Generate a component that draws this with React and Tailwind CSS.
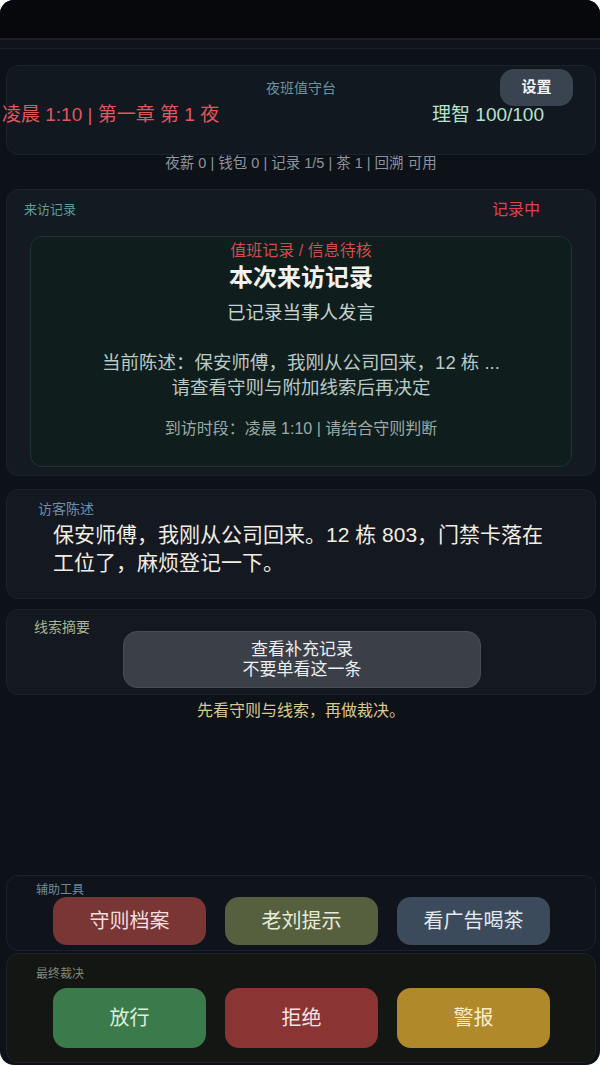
import { useState } from 'react';

const font = { fontFamily: '"Liberation Sans", "Noto Sans CJK SC", sans-serif' };

const tools = [
  { label: '守则档案', className: 'bg-[#7a3535] text-[#f1dede]' },
  { label: '老刘提示', className: 'bg-[#56603f] text-[#e7ecd9]' },
  { label: '看广告喝茶', className: 'bg-[#3c4b5c] text-[#e3e9ef]' }
];

const verdicts = [
  { label: '放行', className: 'bg-[#3a7a4b] text-[#dcefd9]' },
  { label: '拒绝', className: 'bg-[#8b3434] text-[#f6e3e3]' },
  { label: '警报', className: 'bg-[#b08a2a] text-[#f8eccb]' }
];

function Panel({ className = '', children }) {
  return (
    <div className={`rounded-[12px] border border-[#1b222c] ${className}`}>{children}</div>
  );
}

function ButtonRow({ items, className }) {
  return (
    <div className="ml-[46px] grid w-[497px] grid-cols-3 gap-[19px]">
      {items.map((item) => (
        <button
          key={item.label}
          type="button"
          className={`${className} ${item.className} rounded-[14px] text-[20px]`}
        >
          {item.label}
        </button>
      ))}
    </div>
  );
}

export default function App() {
  const [recording] = useState(true);

  return (
    <div className="min-h-[1066px] bg-white" style={font}>
      <div className="flex h-[1065px] w-[600px] flex-col overflow-hidden rounded-[14px] bg-[#0d1118] pb-[2px]">
        <div className="h-[40px] shrink-0 border-b-2 border-[#1a1f28] bg-[#06080b]" />
        <div className="h-[9px] shrink-0 border-b border-[#1a1e27] bg-[#10131b]" />

        <div className="flex flex-1 flex-col pl-[6px] pr-[4px]">
          <Panel className="mt-[16px] h-[90px] bg-[#111820]">
            <div className="relative flex h-[40px] items-center justify-center pt-[4px]">
              <span className="text-[14px] text-[#6b929d]">夜班值守台</span>
              <button
                type="button"
                className="absolute right-[22px] top-[3px] h-[37px] w-[73px] rounded-[14px] bg-[#3a4350] text-[15px] font-bold text-[#f2f2f2]"
              >
                设置
              </button>
            </div>
            <div className="-ml-[5px] -mt-[3px] flex items-center justify-between pr-[51px] text-[19px] leading-[24px]">
              <span className="text-[#e0575c]">凌晨 1:10 | 第一章 第 1 夜</span>
              <span className="text-[#b7e2cb]">理智 100/100</span>
            </div>
          </Panel>

          <p className="-mt-[1px] text-center text-[14.5px] leading-[18px] text-[#8e949c]">
            夜薪 0 | 钱包 0 | 记录 1/5 | 茶 1 | 回溯 可用
          </p>

          <Panel className="mt-[17px] h-[287px] bg-[#141a22] px-[17px] pt-[11px]">
            <div className="flex items-center justify-between pr-[38px]">
              <span className="text-[13px] leading-[18px] text-[#5f9e96]">来访记录</span>
              {recording ? (
                <span className="text-[16px] leading-[18px] text-[#e0404f]">记录中</span>
              ) : null}
            </div>
            <div className="mx-[6px] mt-[17px] flex h-[231px] flex-col items-center rounded-[12px] border border-[#1d3431] bg-[#0f1e1d] pt-[4px] text-center">
              <span className="text-[16px] leading-[20px] text-[#d44b4e]">值班记录 / 信息待核</span>
              <span className="mt-[1px] text-[24px] font-bold leading-[32px] text-[#f1f1ee]">本次来访记录</span>
              <span className="mt-[6px] text-[18.5px] leading-[26px] text-[#c3d3cf]">已记录当事人发言</span>
              <span className="mt-[24px] text-[18.5px] leading-[25px] text-[#bac9c5]">
                当前陈述：保安师傅，我刚从公司回来，12 栋 ...
              </span>
              <span className="text-[18.5px] leading-[25px] text-[#bac9c5]">请查看守则与附加线索后再决定</span>
              <span className="mt-[19px] text-[16px] leading-[20px] text-[#9ba9a7]">
                到访时段：凌晨 1:10 | 请结合守则判断
              </span>
            </div>
          </Panel>

          <Panel className="mt-[13px] h-[110px] bg-[#141820] pl-[31px] pt-[10px]">
            <span className="block text-[14px] leading-[18px] text-[#6a8fab]">访客陈述</span>
            <p className="ml-[15px] mt-[3px] w-[500px] text-[21px] leading-[28px] text-[#f1ede2]">
              保安师傅，我刚从公司回来。12 栋 803，门禁卡落在工位了，麻烦登记一下。
            </p>
          </Panel>

          <Panel className="mt-[10px] h-[86px] bg-[#141820] pt-[8px]">
            <span className="block pl-[27px] text-[14px] leading-[18px] text-[#a9b38f]">线索摘要</span>
            <button
              type="button"
              className="ml-[116px] -mt-[5px] flex h-[57px] w-[358px] flex-col items-center justify-center rounded-[14px] border border-[#474c55] bg-[#3a3f48] text-[17px] leading-[20px] text-[#eceef0]"
            >
              <span>查看补充记录</span>
              <span>不要单看这一条</span>
            </button>
          </Panel>

          <p className="mt-[6px] text-center text-[16px] leading-[20px] text-[#d9c98f]">
            先看守则与线索，再做裁决。
          </p>

          <Panel className="mt-auto h-[76px] bg-[#0f141c] pt-[6px]">
            <span className="block pl-[29px] text-[12px] leading-[16px] text-[#6f8a9b]">辅助工具</span>
            <div className="-mt-[1px]">
              <ButtonRow items={tools} className="h-[48px]" />
            </div>
          </Panel>

          <Panel className="mt-[2px] h-[110px] bg-[#131613] pt-[12px]">
            <span className="block pl-[29px] text-[12px] leading-[16px] text-[#7f8a7a]">最终裁决</span>
            <div className="mt-[6px]">
              <ButtonRow items={verdicts} className="h-[60px]" />
            </div>
          </Panel>
        </div>
      </div>
    </div>
  );
}
